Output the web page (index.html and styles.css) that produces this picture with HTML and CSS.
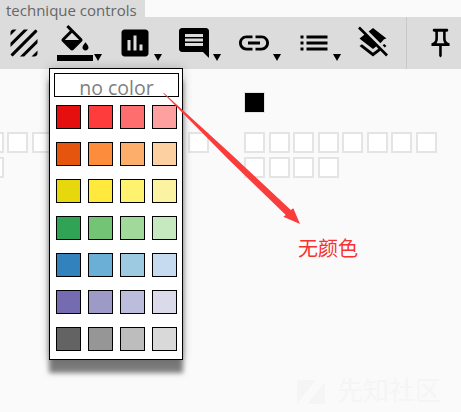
FILE: index.html
```html
<!DOCTYPE html>
<html lang="en">
<head>
    <meta charset="UTF-8">
    <meta name="viewport" content="width=device-width, initial-scale=1.0">
    <title>technique controls</title>
    <link rel="stylesheet" href="styles.css">
</head>
<body>
    <div class="tab">technique controls</div>

    <div class="toolbar">
        <div class="tool tool-first">
            <svg viewBox="0 0 24 24"><path d="M19.51 3.08L3.08 19.51c.09.34.27.65.51.9.25.24.56.42.9.51L20.93 4.49c-.19-.69-.73-1.23-1.42-1.41zM11.88 3L3 11.88v2.83L14.71 3h-2.83zM5 3c-1.1 0-2 .9-2 2v2l4-4H5zm14 18c.55 0 1.05-.22 1.41-.59.37-.36.59-.86.59-1.41v-2l-4 4h2zm-9.71 0h2.83L21 12.12V9.29L9.29 21z"/></svg>
        </div>
        <div class="tool has-menu">
            <svg viewBox="0 0 24 24"><path d="M16.56 8.94L7.62 0 6.21 1.41l2.38 2.38-5.15 5.15c-.59.59-.59 1.54 0 2.12l5.5 5.5c.29.29.68.44 1.06.44s.77-.15 1.06-.44l5.5-5.5c.59-.58.59-1.53 0-2.12zM5.21 10L10 5.21 14.79 10H5.21zM19 11.5s-2 2.17-2 3.5c0 1.1.9 2 2 2s2-.9 2-2c0-1.33-2-3.5-2-3.5z"/><path d="M0 20h24v4H0z"/></svg>
        </div>
        <div class="tool has-menu">
            <svg viewBox="0 0 24 24"><path d="M19 3H5c-1.1 0-2 .9-2 2v14c0 1.1.9 2 2 2h14c1.1 0 2-.9 2-2V5c0-1.1-.9-2-2-2zM9 17H7v-7h2v7zm4 0h-2V7h2v10zm4 0h-2v-4h2v4z"/></svg>
        </div>
        <div class="tool has-menu">
            <svg viewBox="0 0 24 24"><path d="M21.99 4c0-1.1-.89-2-1.99-2H4c-1.1 0-2 .9-2 2v12c0 1.1.9 2 2 2h14l4 4-.01-18zM18 14H6v-2h12v2zm0-3H6V9h12v2zm0-3H6V6h12v2z"/></svg>
        </div>
        <div class="tool has-menu">
            <svg viewBox="0 0 24 24"><path d="M3.9 12c0-1.71 1.39-3.1 3.1-3.1h4V7H7c-2.76 0-5 2.24-5 5s2.24 5 5 5h4v-1.9H7c-1.71 0-3.1-1.39-3.1-3.1zM8 13h8v-2H8v2zm9-6h-4v1.9h4c1.71 0 3.1 1.39 3.1 3.1s-1.39 3.1-3.1 3.1h-4V17h4c2.76 0 5-2.24 5-5s-2.24-5-5-5z"/></svg>
        </div>
        <div class="tool has-menu">
            <svg viewBox="0 0 24 24"><path d="M3 13h2v-2H3v2zm0 4h2v-2H3v2zm0-8h2V7H3v2zm4 4h14v-2H7v2zm0 4h14v-2H7v2zM7 7v2h14V7H7z"/></svg>
        </div>
        <div class="tool">
            <svg viewBox="0 0 24 24"><path d="M19.81 14.99l1.19-.92-1.43-1.43-1.19.92 1.43 1.43zm-.45-5.45L21 9 12 2 9.09 4.27l7.87 7.88 2.4-2.61zM3.27 1L2 2.27l4.22 4.22L3 9l1.63 1.27L12 16l2.1-1.63 1.43 1.43L12 18.54l-7.37-5.73L3 14.07l9 7 4.95-3.85L20.73 21 22 19.73 3.27 1z"/></svg>
        </div>
        <div class="toolbar-sep"></div>
        <div class="tool tool-pin">
            <svg viewBox="0 0 24 24" preserveAspectRatio="none"><path d="M14 4v5c0 1.12.37 2.16 1 3H9c.65-.86 1-1.9 1-3V4h4m3-2H7c-.55 0-1 .45-1 1s.45 1 1 1h1v5c0 1.66-1.34 3-3 3v2h5.97v7l1 1 1-1v-7H19v-2c-1.66 0-3-1.34-3-3V4h1c.55 0 1-.45 1-1s-.45-1-1-1z"/></svg>
        </div>
    </div>

    <div class="stage">
        <div class="cell cell-black legend"></div>
        <div class="groups">
            <div class="cells">
                <div class="cell"></div><div class="cell"></div><div class="cell"></div><div class="cell"></div>
                <div class="cell"></div><div class="cell"></div><div class="cell"></div><div class="cell"></div>
                <div class="cell"></div>
            </div>
            <div class="cells cells-mid">
                <div class="cell"></div>
            </div>
            <div class="cells cells-right">
                <div class="cell"></div><div class="cell"></div><div class="cell"></div><div class="cell"></div>
                <div class="cell"></div><div class="cell"></div><div class="cell"></div><div class="cell"></div>
                <div class="cell"></div><div class="cell"></div><div class="cell"></div><div class="cell"></div>
            </div>
        </div>
    </div>

    <div class="color-menu">
        <div class="no-color">no color</div>
        <div class="swatches">
            <div class="swatch c-red1"></div><div class="swatch c-red2"></div><div class="swatch c-red3"></div><div class="swatch c-red4"></div>
            <div class="swatch c-org1"></div><div class="swatch c-org2"></div><div class="swatch c-org3"></div><div class="swatch c-org4"></div>
            <div class="swatch c-yel1"></div><div class="swatch c-yel2"></div><div class="swatch c-yel3"></div><div class="swatch c-yel4"></div>
            <div class="swatch c-grn1"></div><div class="swatch c-grn2"></div><div class="swatch c-grn3"></div><div class="swatch c-grn4"></div>
            <div class="swatch c-blu1"></div><div class="swatch c-blu2"></div><div class="swatch c-blu3"></div><div class="swatch c-blu4"></div>
            <div class="swatch c-pur1"></div><div class="swatch c-pur2"></div><div class="swatch c-pur3"></div><div class="swatch c-pur4"></div>
            <div class="swatch c-gry1"></div><div class="swatch c-gry2"></div><div class="swatch c-gry3"></div><div class="swatch c-gry4"></div>
        </div>
    </div>

    <svg class="arrow" viewBox="0 0 461 412"><polygon points="163,93 164,93 232,155 290.8,209.9 293.3,208.3 300,224 283.3,216.7 285.8,215.1 228,159"/></svg>
    <div class="arrow-label">无颜色</div>

    <div class="watermark">
        <svg class="watermark-logo" viewBox="0 0 28 24"><polygon points="0,0 19,0 0,24"/><polygon points="28,2 28,24 10,24"/></svg>
        <span>先知社区</span>
    </div>
</body>
</html>
```

FILE: styles.css
```css
html, body {
    height: 100%;
}

body {
    font-family: "Open Sans", "Noto Sans CJK SC", sans-serif;
    background-color: #fafafa;
    margin: 0;
    overflow: hidden;
    position: relative;
}

.tab {
    width: 145px;
    height: 17px;
    background-color: #dcdcdc;
    color: #666;
    font-size: 15px;
    line-height: 20px;
    padding-left: 6px;
    box-sizing: border-box;
    white-space: nowrap;
}

/* toolbar */
.toolbar {
    display: flex;
    height: 52px;
    padding: 8px 0 0 5.5px;
    box-sizing: border-box;
    background-color: #dcdcdc;
    gap: 23.7px;
}

.tool {
    position: relative;
    width: 36px;
    height: 36px;
    flex: none;
}

.tool svg {
    display: block;
    width: 36px;
    height: 36px;
}

.tool-first {
    margin-right: -8.2px;
}

.has-menu::after {
    content: "";
    position: absolute;
    left: 37px;
    top: 29px;
    border-style: solid;
    border-width: 7px 4px 0 4px;
    border-color: #000 transparent transparent transparent;
}

.toolbar-sep {
    width: 1px;
    height: 52px;
    margin-top: -8px;
    margin-left: -8.7px;
    background-color: #c8c8c8;
    flex: none;
}

.tool-pin {
    margin-left: -6.1px;
}

.tool-pin svg {
    width: 31px;
    height: 34.3px;
    margin-top: 1px;
}

/* cells behind the menu */
.stage {
    padding-top: 23px;
}

.cell {
    width: 21px;
    height: 21px;
    box-sizing: border-box;
    border: 2px solid #e4e4e4;
    background-color: #fff;
}

.cell-black {
    background-color: #000;
    border: 1px solid #e4e4e4;
}

.legend {
    margin-left: 244px;
}

.groups {
    display: flex;
    margin-top: 19px;
    margin-left: -17.5px;
}

.cells {
    display: grid;
    grid-template-columns: repeat(8, 21px);
    gap: 4px 3.5px;
}

.cells-mid {
    grid-template-columns: 21px;
    margin-left: 13px;
}

.cells-right {
    margin-left: 35px;
}

/* colour menu */
.color-menu {
    position: absolute;
    left: 49px;
    top: 68px;
    width: 134px;
    height: 292px;
    box-sizing: border-box;
    background-color: #fff;
    border: 1px solid #000;
    padding: 4px 3px 4px 4px;
    box-shadow: 0 13px 5px rgba(0, 0, 0, 0.5), 0 0 10px rgba(0, 0, 0, 0.2);
}

.no-color {
    height: 24px;
    box-sizing: border-box;
    border: 1px solid #000;
    color: #808080;
    font-size: 19.5px;
    line-height: 27px;
    text-align: center;
}

.swatches {
    display: grid;
    grid-template-columns: repeat(4, 25px);
    grid-auto-rows: 24px;
    gap: 13px 7px;
    margin: 8px 0 0 2px;
}

.swatch {
    box-sizing: border-box;
    border: 1px solid #000;
}

.c-red1 { background-color: #e60f0f; }
.c-red2 { background-color: #ff3c3c; }
.c-red3 { background-color: #ff6e6e; }
.c-red4 { background-color: #ffa0a0; }
.c-org1 { background-color: #e6550d; }
.c-org2 { background-color: #fd8d3c; }
.c-org3 { background-color: #fdae6b; }
.c-org4 { background-color: #fdd0a2; }
.c-yel1 { background-color: #e6d80d; }
.c-yel2 { background-color: #ffe93c; }
.c-yel3 { background-color: #fff26e; }
.c-yel4 { background-color: #fbf3a2; }
.c-grn1 { background-color: #31a354; }
.c-grn2 { background-color: #74c476; }
.c-grn3 { background-color: #a1d99b; }
.c-grn4 { background-color: #c7e9c0; }
.c-blu1 { background-color: #3182bd; }
.c-blu2 { background-color: #6baed6; }
.c-blu3 { background-color: #9ecae1; }
.c-blu4 { background-color: #c6dbef; }
.c-pur1 { background-color: #756bb1; }
.c-pur2 { background-color: #9e9ac8; }
.c-pur3 { background-color: #bcbddc; }
.c-pur4 { background-color: #dadaeb; }
.c-gry1 { background-color: #636363; }
.c-gry2 { background-color: #969696; }
.c-gry3 { background-color: #bdbdbd; }
.c-gry4 { background-color: #d9d9d9; }

/* annotation drawn over the screenshot */
.arrow {
    position: absolute;
    left: 0;
    top: 0;
    width: 461px;
    height: 412px;
    fill: #f93c3c;
}

.arrow-label {
    position: absolute;
    left: 298px;
    top: 235px;
    color: #f93030;
    font-size: 20px;
    line-height: 28px;
}

.watermark {
    position: absolute;
    left: 297px;
    top: 373px;
    display: flex;
    align-items: center;
    gap: 12px;
    color: #f5f5f5;
    font-size: 26px;
    line-height: 34px;
    white-space: nowrap;
}

.watermark-logo {
    width: 28px;
    height: 24px;
    margin-top: 4px;
    fill: #f5f5f5;
}
```
